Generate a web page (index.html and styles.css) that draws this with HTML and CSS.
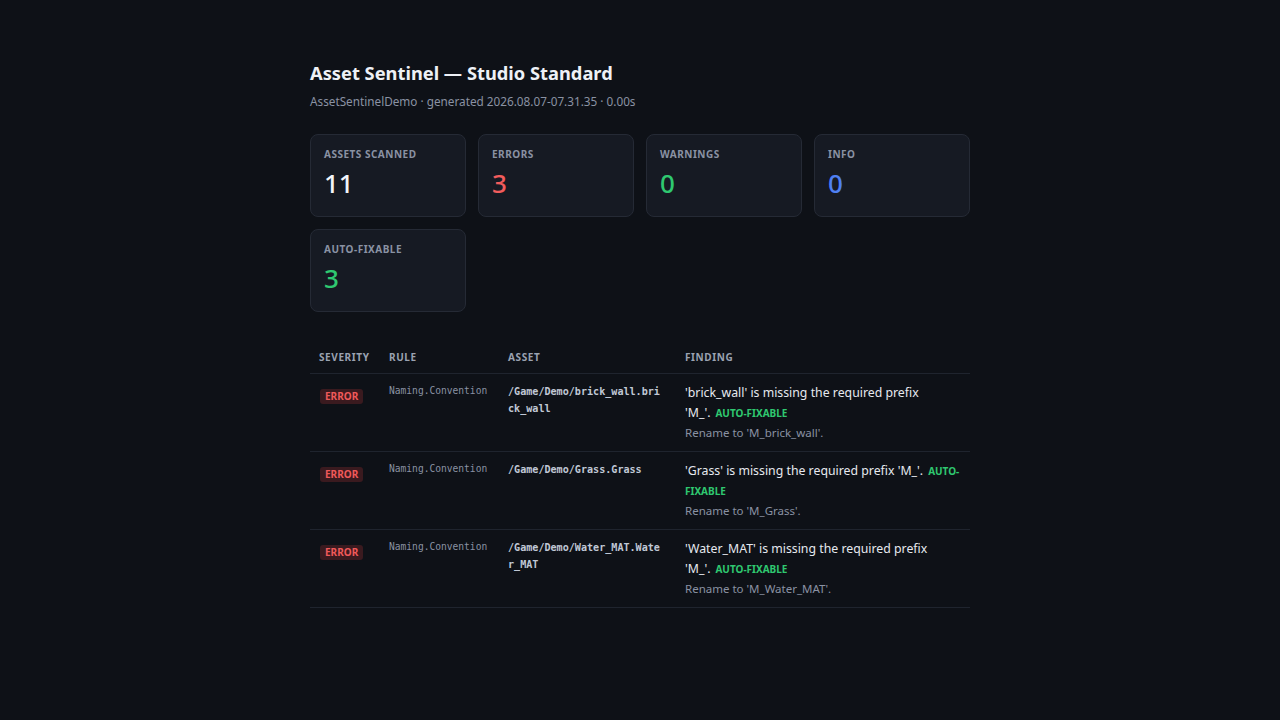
FILE: index.html
```html
<!DOCTYPE html>
<html lang="en">
<head>
    <meta charset="UTF-8">
    <meta name="viewport" content="width=device-width, initial-scale=1.0">
    <title>Asset Sentinel Report</title>
    <link rel="stylesheet" href="styles.css">
</head>
<body>
    <div class="report">
        <h1>Asset Sentinel — Studio Standard</h1>
        <p class="meta">AssetSentinelDemo · generated 2026.08.07-07.31.35 · 0.00s</p>

        <div class="cards">
            <div class="card">
                <div class="label">Assets scanned</div>
                <div class="value">11</div>
            </div>
            <div class="card">
                <div class="label">Errors</div>
                <div class="value err">3</div>
            </div>
            <div class="card">
                <div class="label">Warnings</div>
                <div class="value ok">0</div>
            </div>
            <div class="card">
                <div class="label">Info</div>
                <div class="value info">0</div>
            </div>
            <div class="card">
                <div class="label">Auto-fixable</div>
                <div class="value ok">3</div>
            </div>
        </div>

        <table class="findings">
            <thead>
                <tr>
                    <th class="col-sev">Severity</th>
                    <th class="col-rule">Rule</th>
                    <th class="col-asset">Asset</th>
                    <th>Finding</th>
                </tr>
            </thead>
            <tbody>
                <tr>
                    <td><span class="sev">ERROR</span></td>
                    <td class="rule">Naming.Convention</td>
                    <td class="asset">/Game/Demo/brick_wall.brick_wall</td>
                    <td class="finding">
                        <div class="msg">'brick_wall' is missing the required prefix 'M_'.<span class="fix">AUTO-FIXABLE</span></div>
                        <div class="hint">Rename to 'M_brick_wall'.</div>
                    </td>
                </tr>
                <tr>
                    <td><span class="sev">ERROR</span></td>
                    <td class="rule">Naming.Convention</td>
                    <td class="asset">/Game/Demo/Grass.Grass</td>
                    <td class="finding">
                        <div class="msg">'Grass' is missing the required prefix 'M_'.<span class="fix">AUTO-FIXABLE</span></div>
                        <div class="hint">Rename to 'M_Grass'.</div>
                    </td>
                </tr>
                <tr>
                    <td><span class="sev">ERROR</span></td>
                    <td class="rule">Naming.Convention</td>
                    <td class="asset">/Game/Demo/Water_MAT.Water_MAT</td>
                    <td class="finding">
                        <div class="msg">'Water_MAT' is missing the required prefix 'M_'.<span class="fix">AUTO-FIXABLE</span></div>
                        <div class="hint">Rename to 'M_Water_MAT'.</div>
                    </td>
                </tr>
            </tbody>
        </table>
    </div>
</body>
</html>
```

FILE: styles.css
```css
body {
    margin: 0;
    padding: 0;
    background-color: #0e1117;
    color: #e6e9ef;
    font-family: "Noto Sans", "Open Sans", sans-serif;
}

.report {
    width: 660px;
    margin: 0 auto;
    padding-top: 58px;
}

h1 {
    margin: 0;
    font-size: 18.3px;
    font-weight: 700;
    line-height: 30px;
    color: #eef1f6;
}

.meta {
    margin: 3px 0 0;
    font-size: 11.75px;
    line-height: 20px;
    color: #8a92a3;
}

.cards {
    display: grid;
    grid-template-columns: repeat(4, 1fr);
    gap: 12px;
    margin-top: 23px;
}

.card {
    height: 83px;
    box-sizing: border-box;
    padding: 12px 13px;
    background-color: #161a23;
    border: 1px solid #252a35;
    border-radius: 8px;
}

.label {
    font-size: 10px;
    font-weight: 700;
    letter-spacing: 0.5px;
    text-transform: uppercase;
    color: #8a92a3;
    line-height: 14px;
}

.value {
    margin-top: 6px;
    font-size: 26px;
    font-weight: 500;
    line-height: 32px;
    color: #f2f5fa;
}

.value.err { color: #f25c5c; }
.value.ok { color: #2fc870; }
.value.info { color: #4f80f2; }

.findings {
    width: 100%;
    margin-top: 30px;
    border-collapse: collapse;
    table-layout: fixed;
}

.findings th {
    text-align: left;
    font-size: 10px;
    font-weight: 700;
    letter-spacing: 0.6px;
    text-transform: uppercase;
    color: #9aa2b1;
    padding: 8px 10px 9px 9px;
    border-bottom: 1px solid #1f242e;
}

.col-sev { width: 51px; }
.col-rule { width: 100px; }
.col-asset { width: 158px; }

.findings td {
    vertical-align: top;
    padding: 9px 10px 8px 9px;
    border-bottom: 1px solid #1f242e;
}

.sev {
    display: inline-block;
    margin: 3px 0 0 1px;
    padding: 1px 5px;
    font-size: 10px;
    font-weight: 700;
    line-height: 13px;
    color: #f0595a;
    background-color: #3a1a1f;
    border-radius: 3px;
}

.rule {
    font-family: "DejaVu Sans Mono", monospace;
    font-size: 9.6px;
    line-height: 16px;
    color: #8a92a3;
}

.findings td.asset {
    padding-right: 13px;
    font-family: "DejaVu Sans Mono", monospace;
    font-size: 10.1px;
    font-weight: 700;
    line-height: 17px;
    color: #c0c8d6;
    word-break: break-all;
}

.msg {
    font-size: 12.3px;
    line-height: 20px;
    color: #e6e9ef;
}

.fix {
    margin-left: 5px;
    font-size: 10px;
    font-weight: 700;
    color: #2fc870;
}

.hint {
    font-size: 11.5px;
    line-height: 20px;
    color: #8a92a3;
}
```
